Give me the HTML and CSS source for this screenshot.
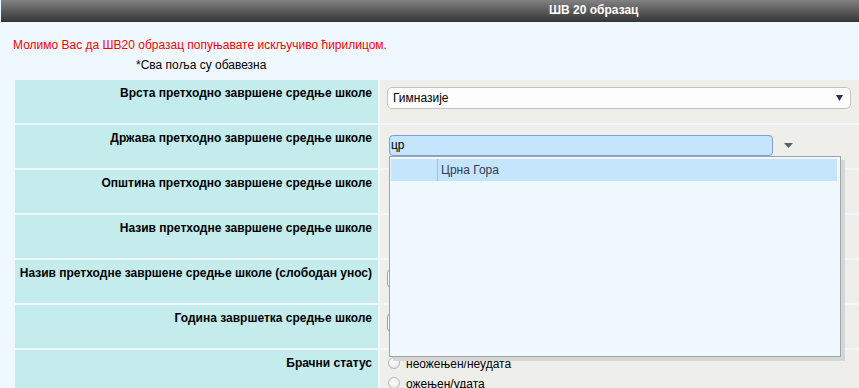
FILE: index.html
```html
<!DOCTYPE html>
<html lang="sr">
<head>
<meta charset="utf-8">
<title>ШВ 20 образац</title>
<link rel="stylesheet" href="styles.css">
</head>
<body>
<div class="titlebar"><span class="title">ШВ 20 образац</span></div>
<p class="warn">Молимо Вас да ШВ20 образац попуњавате искључиво ћирилицом.</p>
<p class="req">*Сва поља су обавезна</p>
<div class="form">
  <div class="lbl">Врста претходно завршене средње школе</div>
  <div class="val">
    <div class="select"><span>Гимназије</span><svg class="sel-arrow" width="7" height="6" viewBox="0 0 7 6"><path d="M0 0H7L3.5 6Z" fill="#1f3550"/></svg></div>
  </div>

  <div class="lbl">Држава претходно завршене средње школе</div>
  <div class="val val-combo">
    <div class="combo">
      <span class="combo-input">цр</span>
      <svg class="combo-arrow" width="9" height="5" viewBox="0 0 9 5"><path d="M0 0H9L4.5 5Z" fill="#5a6068"/></svg>
    </div>
    <div class="dropdown">
      <div class="opt"><span class="opt-icon"></span><span class="opt-text">Црна Гора</span></div>
    </div>
  </div>

  <div class="lbl">Општина претходно завршене средње школе</div>
  <div class="val"></div>

  <div class="lbl">Назив претходне завршене средње школе</div>
  <div class="val"></div>

  <div class="lbl">Назив претходне завршене средње школе (слободан унос)</div>
  <div class="val"><div class="textbox"></div></div>

  <div class="lbl">Година завршетка средње школе</div>
  <div class="val"><div class="textbox textbox-b"></div></div>

  <div class="lbl lbl-last">Брачни статус</div>
  <div class="val val-radios">
    <label class="radio-row"><span class="radio"></span><span>неожењен/неудата</span></label>
    <label class="radio-row"><span class="radio"></span><span>ожењен/удата</span></label>
  </div>
</div>
</body>
</html>
```

FILE: styles.css
```css
html, body {
  margin: 0;
  padding: 0;
  overflow: hidden;
}
body {
  background: #eef8fe;
  font-family: "Liberation Sans", Arial, sans-serif;
  font-size: 12px;
  color: #000;
  width: 859px;
  height: 388px;
}
.titlebar {
  margin-left: 1px;
  height: 22px;
  line-height: 20px;
  background: linear-gradient(to bottom, #828282 0%, #5a5a5a 50%, #353535 100%);
  padding-left: 548px;
}
.title {
  color: #fff;
  font-weight: bold;
  font-size: 12px;
}
.warn {
  margin: 16px 0 0 0;
  padding-left: 13px;
  line-height: 14px;
  color: #ff0000;
}
.req {
  margin: 6px 0 0 0;
  padding-left: 136px;
  line-height: 14px;
  color: #000;
}
.form {
  margin: 8px 0 0 15px;
  width: 844px;
  display: grid;
  grid-template-columns: 363px 1fr;
  grid-auto-rows: 43px;
  gap: 2px;
}
.lbl {
  background: #c4ecec;
  font-weight: bold;
  text-align: right;
  padding: 6px 6px 0 0;
  line-height: 14px;
}
.val {
  background: #eeeeea;
  position: relative;
}
.select {
  margin: 7px 0 0 7px;
  width: 464px;
  height: 22px;
  box-sizing: border-box;
  border: 1px solid #c4c4c4;
  border-radius: 5px;
  background: #fdfdfd;
  display: flex;
  align-items: center;
  justify-content: space-between;
  padding: 0 7px 0 5px;
  line-height: 14px;
}
.sel-arrow {
  display: block;
}
.combo {
  display: flex;
  align-items: center;
  margin: 10px 0 0 9px;
}
.combo-input {
  width: 384px;
  height: 21px;
  box-sizing: border-box;
  border: 1px solid #7d9fd8;
  border-radius: 4px;
  background: #c5e5fc;
  padding-left: 1px;
  line-height: 19px;
  color: #000;
}
.combo-arrow {
  display: block;
  margin: 0 0 0 11px;
}
.dropdown {
  position: absolute;
  z-index: 10;
  left: 9px;
  top: 31px;
  width: 452px;
  height: 201px;
  box-sizing: border-box;
  border: 1px solid #a3a3a3;
  background: #eef8fe;
  box-shadow: 4px 4px 0 #d6d6d6;
  padding: 2px 3px 0 1px;
}
.opt {
  display: flex;
  height: 22px;
  background: #c5e5fc;
  line-height: 22px;
}
.opt-icon {
  width: 46px;
  border-right: 1px solid #aebccb;
}
.opt-text {
  padding-left: 3px;
  color: #2f3b52;
}
.textbox {
  margin: 9px 0 0 7px;
  width: 300px;
  height: 19px;
  box-sizing: border-box;
  border: 1px solid #a0a0a0;
  border-radius: 4px;
  background: #fff;
}
.textbox-b {
  margin-top: 8px;
}
.val-radios {
  padding: 7px 0 0 8px;
  display: flex;
  flex-direction: column;
  gap: 8px;
  height: 60px;
}
.lbl-last {
  height: 60px;
}
.radio-row {
  display: flex;
  align-items: center;
  gap: 6px;
  height: 12px;
  line-height: 14px;
}
.radio {
  width: 12px;
  height: 12px;
  box-sizing: border-box;
  border-radius: 50%;
  border: 1px solid #b8b8b8;
  background: radial-gradient(circle at 50% 35%, #ffffff 0%, #f2f2f2 50%, #dcdcdc 100%);
  flex: none;
}
.radio-row span:last-child {
  position: relative;
  top: 1px;
}
```
